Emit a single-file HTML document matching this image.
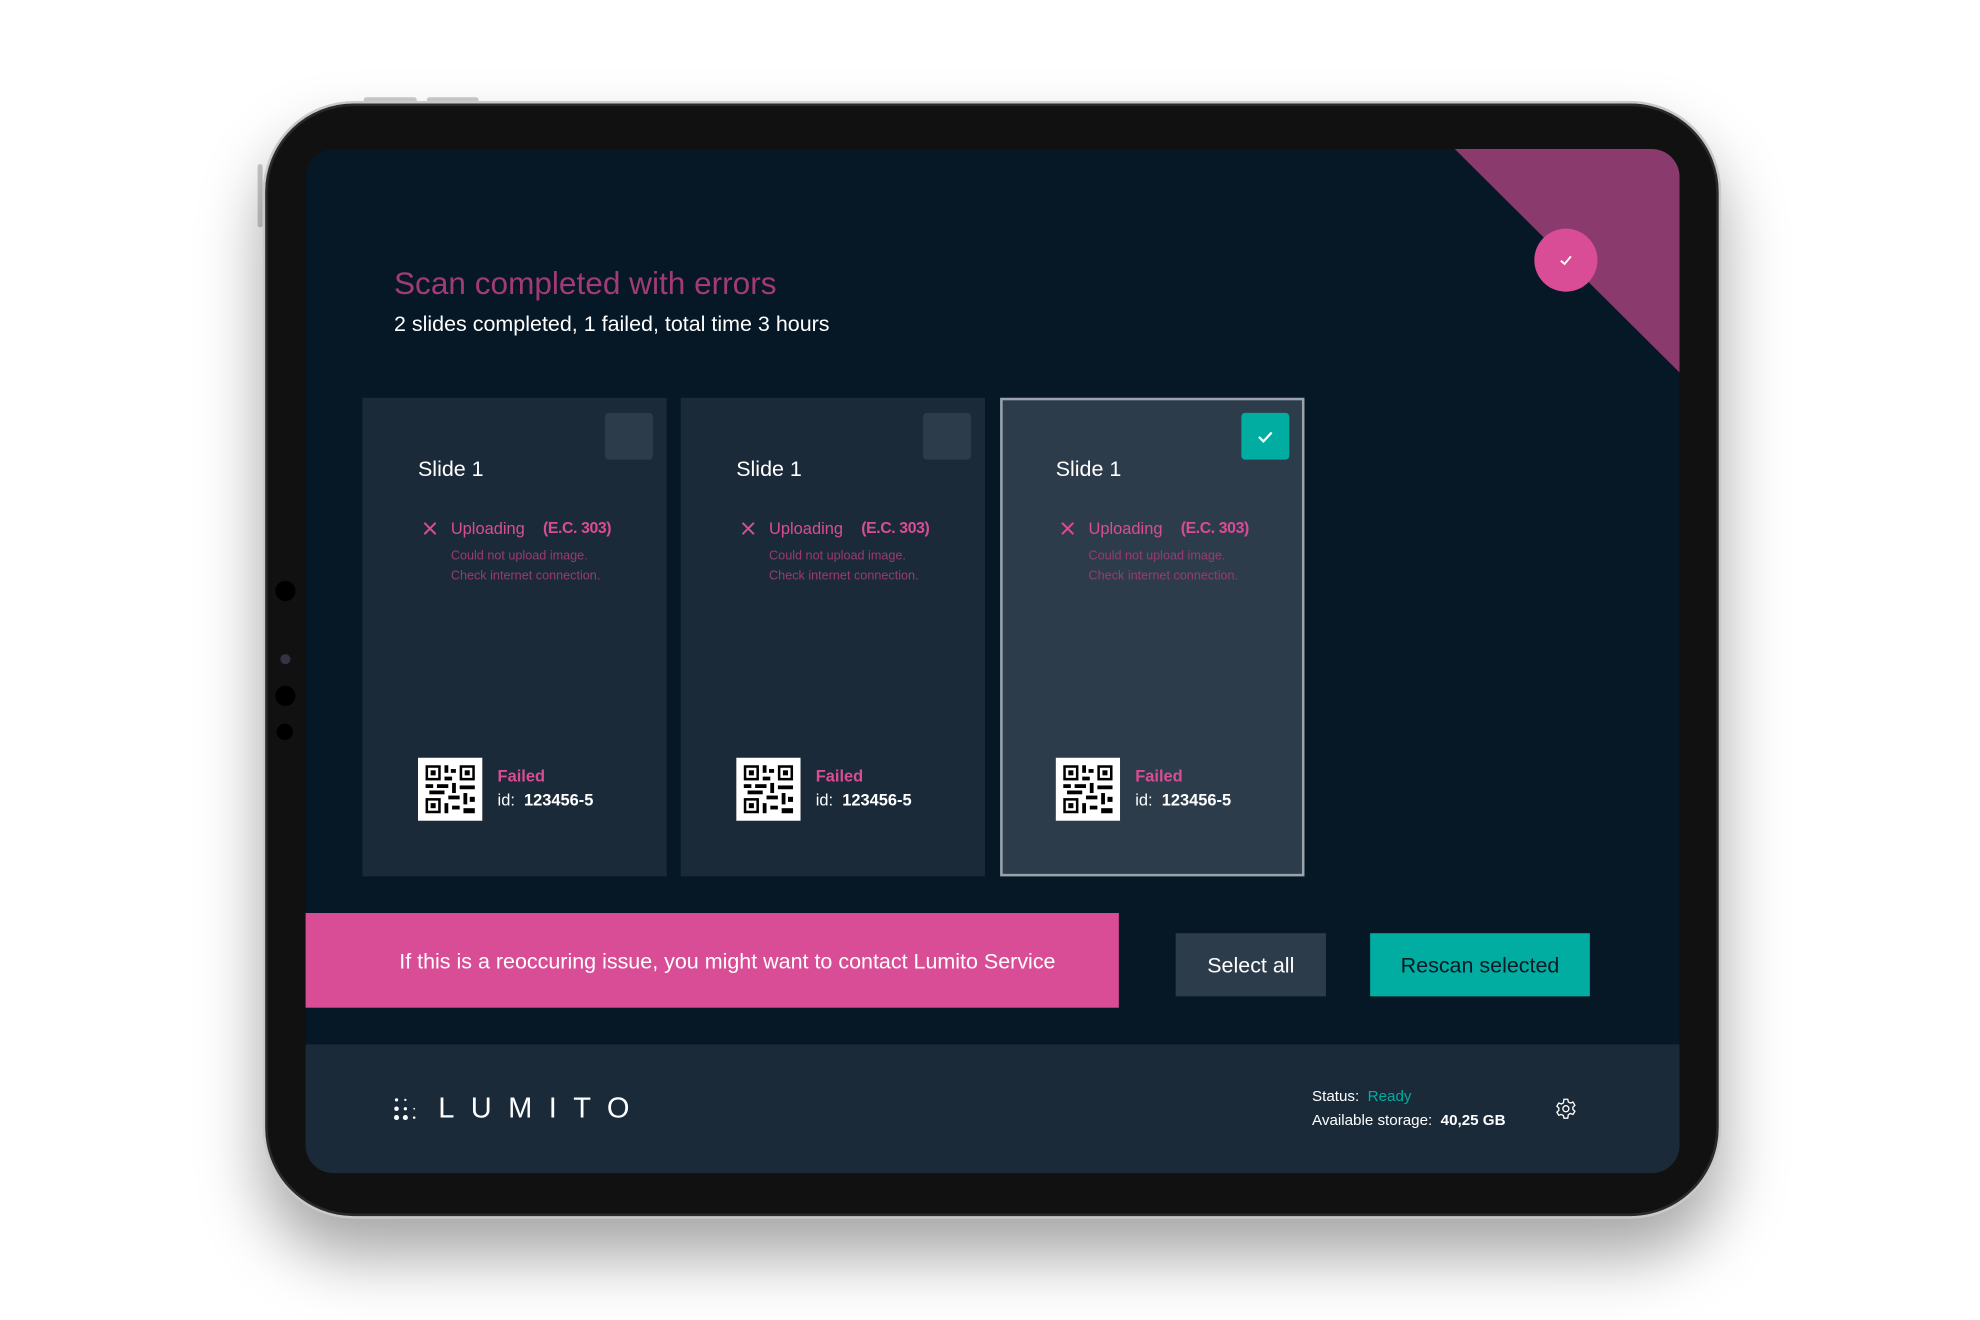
<!DOCTYPE html>
<html><head><meta charset="utf-8"><style>
*{margin:0;padding:0;box-sizing:border-box}
html,body{width:1980px;height:1320px;overflow:hidden;background:#fff;font-family:"Liberation Sans",sans-serif}
#w{position:absolute;left:0;top:0;width:1568px;height:1045px;transform:scale(1.2628);transform-origin:0 0}
.a{position:absolute}
.dev{left:208px;top:80px;width:1155px;height:885px;border-radius:72px;background:#111;border:2px solid #c9c9c9;box-shadow:0 30px 50px rgba(0,0,0,.35),inset 0 0 0 2px #2a2a2a}
.scr{left:242px;top:118px;width:1088px;height:811px;border-radius:22px;background:#061725;overflow:hidden}
.card{width:241px;height:379px;background:#1b2a38}
.cb{width:38px;height:37px;border-radius:3px;background:#2d3c4b}
.t{color:#fff;white-space:nowrap}
.pk{color:#d94d96}
.dk{color:#9a3a74}
.cc{position:absolute;top:315px;width:241px;height:379px}
</style></head><body><div id="w">
<div class="a" style="left:288px;top:77px;width:42px;height:4px;background:#ccc;border-radius:2px"></div>
<div class="a" style="left:338px;top:77px;width:41px;height:4px;background:#ccc;border-radius:2px"></div>
<div class="a" style="left:204px;top:130px;width:4px;height:50px;background:#ccc;border-radius:2px"></div>
<div class="a dev"></div>
<div class="a" style="left:218px;top:460px;width:16px;height:16px;border-radius:50%;background:#000"></div>
<div class="a" style="left:222px;top:518px;width:8px;height:8px;border-radius:50%;background:#334"></div>
<div class="a" style="left:218px;top:543px;width:16px;height:16px;border-radius:50%;background:#000"></div>
<div class="a" style="left:219px;top:573px;width:13px;height:13px;border-radius:50%;background:#000"></div>
<div class="a scr">
  <svg class="a" style="left:0;top:0" width="1088" height="811"><polygon points="910,0 1088,0 1088,177" fill="#8a3a6c"/></svg>
  <div class="a" style="left:973px;top:63px;width:50px;height:50px;border-radius:50%;background:#d94d96"></div>
  <svg class="a" style="left:992px;top:82px" width="12" height="12"><path d="M2 6.5 L5 9 L10 3" stroke="#fff" stroke-width="1.5" fill="none"/></svg>
  <div class="a" style="left:70px;top:93px;font-size:25px;color:#a13b77;white-space:nowrap">Scan completed with errors</div>
  <div class="a t" style="left:70px;top:129px;font-size:17px">2 slides completed, 1 failed, total time 3 hours</div>
</div>
<div class="a card" style="left:287px;top:315px"></div>
<div class="a card" style="left:539px;top:315px"></div>
<div class="a card" style="left:792px;top:315px;background:#2d3c4b;border:2px solid #9aa3ad"></div>
<div class="a cb" style="left:479px;top:327px"></div>
<div class="a cb" style="left:731px;top:327px"></div>
<div class="a cb" style="left:983px;top:327px;background:#00ada0"></div>
<svg class="a" style="left:995px;top:339px" width="14" height="14"><path d="M2 7 L5.5 10.5 L12 3.5" stroke="#fff" stroke-width="1.8" fill="none"/></svg>
<div class="cc" style="left:287px">
 <div class="a t" style="left:44px;top:47px;font-size:17px">Slide 1</div>
 <svg class="a" style="left:48px;top:98px" width="11" height="11"><path d="M1 1L10 10M10 1L1 10" stroke="#d94d96" stroke-width="1.6"/></svg>
 <div class="a pk" style="left:70px;top:96px;font-size:13px;white-space:nowrap">Uploading</div>
 <div class="a pk" style="left:143px;top:96px;font-size:12.5px;font-weight:bold;white-space:nowrap;letter-spacing:-0.3px">(E.C. 303)</div>
 <div class="a dk" style="left:70px;top:118px;font-size:10px;line-height:16px;white-space:nowrap">Could not upload image.<br>Check internet connection.</div>
 <svg class="a" style="left:44px;top:285px" width="51" height="50"><rect width="51" height="50" fill="#fff"/><g fill="#000"><rect x="6" y="6" width="12" height="12"/><rect x="33" y="6" width="12" height="12"/><rect x="6" y="32" width="12" height="12"/></g><g fill="#fff"><rect x="8" y="8" width="8" height="8"/><rect x="35" y="8" width="8" height="8"/><rect x="8" y="34" width="8" height="8"/></g><g fill="#000"><rect x="10" y="10" width="4" height="4"/><rect x="37" y="10" width="4" height="4"/><rect x="10" y="36" width="4" height="4"/><rect x="21" y="6" width="3" height="6"/><rect x="26" y="9" width="4" height="3"/><rect x="21" y="15" width="6" height="3"/><rect x="6" y="21" width="6" height="3"/><rect x="15" y="21" width="9" height="3"/><rect x="27" y="20" width="3" height="8"/><rect x="33" y="22" width="12" height="3"/><rect x="9" y="26" width="12" height="3"/><rect x="24" y="30" width="9" height="3"/><rect x="36" y="28" width="3" height="9"/><rect x="21" y="36" width="3" height="8"/><rect x="27" y="38" width="6" height="3"/><rect x="36" y="40" width="9" height="4"/><rect x="41" y="31" width="4" height="4"/></g></svg>
 <div class="a pk" style="left:107px;top:292px;font-size:13px;font-weight:bold">Failed</div>
 <div class="a t" style="left:107px;top:311px;font-size:13px">id:&nbsp; <b>123456-5</b></div>
</div>
<script>
var c=document.querySelector('.cc');
['539px','792px'].forEach(function(l){var n=c.cloneNode(true);n.style.left=l;document.getElementById('w').appendChild(n);});
</script>
<div class="a" style="left:242px;top:723px;width:644px;height:75px;background:#d94d96;color:#fff;font-size:17px;text-align:center;line-height:77px;padding-left:24px;white-space:nowrap">If this is a reoccuring issue, you might want to contact Lumito Service</div>
<div class="a" style="left:931px;top:739px;width:119px;height:50px;background:#2d3c4b;color:#fff;font-size:17px;text-align:center;line-height:52px">Select all</div>
<div class="a" style="left:1085px;top:739px;width:174px;height:50px;background:#00ada0;color:#0a1a26;font-size:17px;text-align:center;line-height:52px">Rescan selected</div>
<div class="a" style="left:242px;top:827px;width:1088px;height:102px;background:#1b2a38;border-radius:0 0 22px 22px"></div>
<svg class="a" style="left:311px;top:868px" width="22" height="20"><g fill="#fff"><circle cx="3" cy="3" r="1.3"/><circle cx="3" cy="10" r="1.8"/><circle cx="3" cy="17" r="2"/><circle cx="10" cy="3" r=".9"/><circle cx="10" cy="10" r="1.3"/><circle cx="10" cy="17" r="2"/><circle cx="17" cy="10" r=".7"/><circle cx="17" cy="17" r="1"/></g></svg>
<div class="a t" style="left:347px;top:864px;font-size:23px;letter-spacing:13px;font-weight:300">LUMITO</div>
<div class="a t" style="left:1039px;top:861px;font-size:12px">Status:&nbsp; <span style="color:#00ada0">Ready</span></div>
<div class="a t" style="left:1039px;top:880px;font-size:12px">Available storage:&nbsp; <b>40,25 GB</b></div>
<svg class="a" style="left:1231px;top:869px" width="18" height="18" viewBox="0 0 24 24"><circle cx="12" cy="12" r="3.2" fill="none" stroke="#fff" stroke-width="1.4"/><path d="M10 2h4l.6 2.8 2.2 1.2 2.7-1 2 3.4-2.1 1.9v2.4l2.1 1.9-2 3.4-2.7-1-2.2 1.2L14 22h-4l-.6-2.8-2.2-1.2-2.7 1-2-3.4 2.1-1.9v-2.4L2.5 9.4l2-3.4 2.7 1 2.2-1.2z" fill="none" stroke="#fff" stroke-width="1.4"/></svg>
</div></body></html>
